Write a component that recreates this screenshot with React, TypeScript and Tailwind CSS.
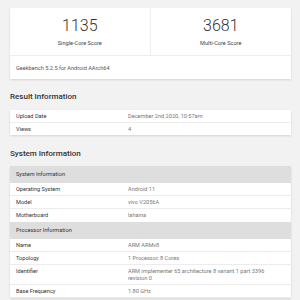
import React from "react";

const Row = ({ label, value, tall }: { label: string; value: string; tall?: boolean }) => (
  <div className={`flex border-b border-[#ececec] ${tall ? "pt-[3px] pb-[2px]" : "h-[12px] items-center"} box-content`}>
    <div className={`w-[118px] pl-[6px] text-[#333] ${tall ? "leading-[7px]" : "leading-[12px]"}`}>{label}</div>
    <div className={`w-[146px] text-[#777] ${tall ? "leading-[7px]" : "leading-[12px]"}`}>{value}</div>
  </div>
);

const Header = ({ title }: { title: string }) => (
  <div className="h-[17px] flex items-center bg-[#dedede] pl-[6px] text-[#333] leading-[17px]">{title}</div>
);

export default function App() {
  return (
    <div
      className="w-[300px] h-[300px] overflow-hidden bg-[#f2f2f2] pt-[8px] pl-[10px] text-[5.6px]"
      style={{ fontFamily: "Roboto, 'Liberation Sans', sans-serif" }}
    >
      <div className="w-[281px] bg-white shadow-[0_1px_2px_rgba(0,0,0,0.12)]">
        <div className="grid grid-cols-2 border-b border-[#ededed]">
          <div className="flex flex-col items-center pt-[10px] pb-[8px] border-r border-[#ededed]">
            <div className="text-[16px] leading-[16px] font-light text-[#333]">1135</div>
            <div className="mt-[5px] leading-[8px] text-[#444]">Single-Core Score</div>
          </div>
          <div className="flex flex-col items-center pt-[10px] pb-[8px]">
            <div className="text-[16px] leading-[16px] font-light text-[#333]">3681</div>
            <div className="mt-[5px] leading-[8px] text-[#444]">Multi-Core Score</div>
          </div>
        </div>
        <div className="pl-[6px] pt-[8px] pb-[7px] leading-[8px] text-[#555]">Geekbench 5.2.5 for Android AArch64</div>
      </div>

      <div className="mt-[13px] text-[8px] leading-[10px] font-medium text-[#333]">Result Information</div>
      <div className="mt-[8px] w-[281px] bg-white shadow-[0_1px_2px_rgba(0,0,0,0.12)]">
        <Row label="Upload Date" value="December 2nd 2020, 10:57am" />
        <div className="flex h-[12px] items-center">
          <div className="w-[118px] pl-[6px] text-[#333]">Views</div>
          <div className="text-[#777]">4</div>
        </div>
      </div>

      <div className="mt-[14px] text-[8px] leading-[10px] font-medium text-[#333]">System Information</div>
      <div className="mt-[7px] w-[281px] bg-white shadow-[0_1px_2px_rgba(0,0,0,0.12)]">
        <Header title="System Information" />
        <Row label="Operating System" value="Android 11" />
        <Row label="Model" value="vivo V2056A" />
        <div className="flex h-[13px] items-center">
          <div className="w-[118px] pl-[6px] text-[#333]">Motherboard</div>
          <div className="text-[#777]">lahaina</div>
        </div>
        <Header title="Processor Information" />
        <Row label="Name" value="ARM ARMv8" />
        <Row label="Topology" value="1 Processor, 8 Cores" />
        <Row label="Identifier" value="ARM implementer 65 architecture 8 variant 1 part 3396 revision 0" tall />
        <Row label="Base Frequency" value="1.80 GHz" />
      </div>
    </div>
  );
}
